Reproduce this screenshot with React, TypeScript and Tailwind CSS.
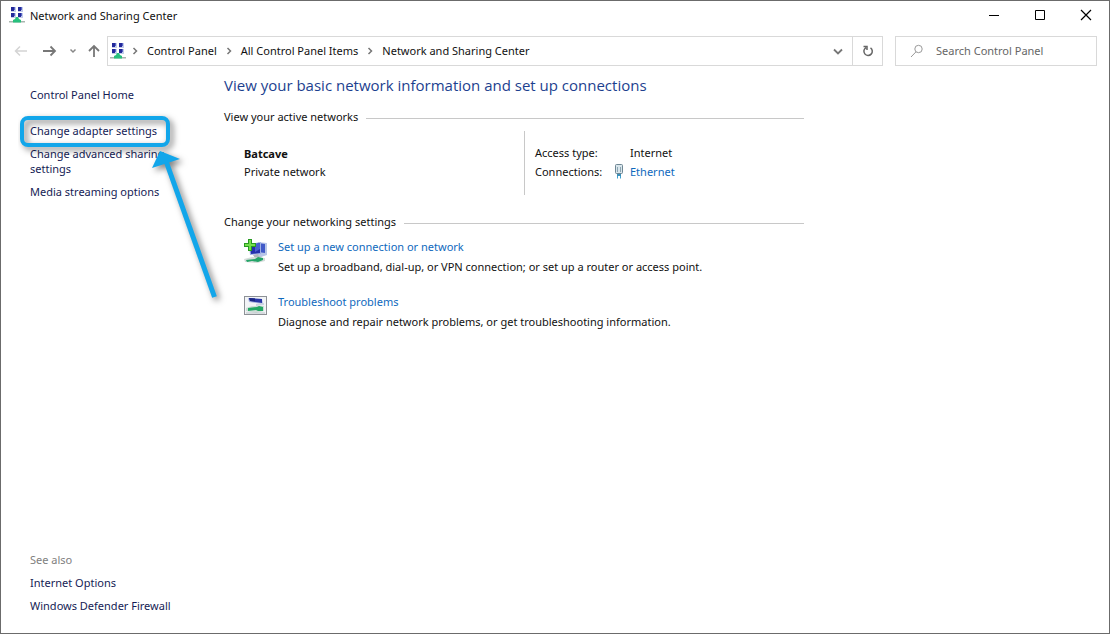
import type { ReactNode } from "react";

function NetworkIcon() {
  return (
    <svg className="h-4 w-4 shrink-0" viewBox="0 0 16 16" aria-hidden="true">
      {[0, 6].map((y) =>
        [2, 9].map((x) => (
          <g key={`${x}-${y}`}>
            <rect x={x} y={y} width="5" height="5" fill="#c3cbea" />
            <rect x={x} y={y} width="3" height="4" fill="#23289a" />
            <rect x={x + 3} y={y} width="1" height="3" fill="#5665c4" />
          </g>
        )),
      )}
      <path d="M0 14h16v1.500H0z" fill="#a9b5ae" />
      <path d="M7 10h2l1 2 2 1v2.500H4V13l2-1z" fill="#27c07d" />
    </svg>
  );
}

function NewConnectionIcon() {
  return (
    <svg className="h-7 w-6 shrink-0" viewBox="0 0 24 28" aria-hidden="true">
      <path d="M14 3l9 1v12l-6 2-5-3z" fill="#b8c6e8" />
      <path d="M14 4l7 1v9l-7-1z" fill="#4059c8" />
      <path d="M5 5l12-2v12L6 16z" fill="#9fb0e4" />
      <path d="M6 6l10-2v10l-9 1z" fill="#2430ac" />
      <path d="M11 5l5-1v6l-5 3z" fill="#4a60d0" />
      <path d="M9 16l5-1 1 2 3 1-7 1z" fill="#aeb5bd" />
      <path d="M0 20l8-2 13 1v3l-8 2-12-1z" fill="#d5dcda" />
      <path d="M2 21l9-1 3-2 5 1v2l-5 2-6-1-5 1z" fill="#24a568" />
      <path d="M4 0h4v4h4v4H8v4H4V8H0V4h4z" fill="#299b22" />
      <path d="M5 1h2v4h4v2H7v4H5V7H1V5h4z" fill="#75df4c" />
    </svg>
  );
}

function TroubleshootIcon() {
  return (
    <svg className="mt-0.5 h-5 w-6 shrink-0" viewBox="0 0 24 20" aria-hidden="true">
      <rect x="0.500" y="0.500" width="22" height="18" fill="#f2f4f6" stroke="#8d9196" />
      <path d="M4 2l14 1 1 5-14-2z" fill="#aab6e2" />
      <path d="M5 2l13 1v4L6 5z" fill="#2937a8" />
      <path d="M5 2l6 .5v3L6 5z" fill="#1b2683" />
      <path d="M12 8l8-1v2l-8 1z" fill="#ccd4e2" />
      <path d="M2 12l6-2 12 0v5l-8 2-10-2z" fill="#cfdcd7" />
      <path d="M4 12l9-1 2-1 4 1v4l-5 0-2-1-8 1z" fill="#22a863" />
      <path d="M2 17h19" stroke="#bcc3c8" />
    </svg>
  );
}

function EthernetIcon() {
  return (
    <svg className="h-[15px] w-2 shrink-0" viewBox="0 0 8 15" aria-hidden="true">
      <rect x="0.500" y="0.500" width="7" height="9" rx="1" fill="#d9e6ec" stroke="#6f8794" />
      <path d="M2.500 3v5M5.500 3v5" stroke="#8ba5b2" />
      <path d="M2 10h4v2H2z" fill="#3d8fb8" />
      <path d="M2.500 12v2.500M5.500 12v2.500" stroke="#3fa0cf" />
    </svg>
  );
}

function Chevron() {
  return (
    <svg className="h-2 w-2 shrink-0" viewBox="0 0 8 8" fill="none" stroke="#777" strokeWidth="1.500" aria-hidden="true">
      <path d="M2.500 1l3 3-3 3" />
    </svg>
  );
}

function SideLink({ children }: { children: ReactNode }) {
  return (
    <a href="#" className="text-[#151c55] hover:underline">
      {children}
    </a>
  );
}

function TitleBar() {
  return (
    <header className="flex h-7 items-center justify-between pl-2">
      <div className="flex items-center gap-[5px]">
        <NetworkIcon />
        <h1>Network and Sharing Center</h1>
      </div>
      <div className="flex h-full text-black">
        <button aria-label="Minimize" className="flex w-[46px] items-center justify-center">
          <svg className="h-3 w-3" viewBox="0 0 12 12" stroke="currentColor" fill="none"><path d="M1 6.500h10" /></svg>
        </button>
        <button aria-label="Maximize" className="flex w-[46px] items-center justify-center">
          <svg className="h-3 w-3" viewBox="0 0 12 12" stroke="currentColor" fill="none"><path d="M1.500 1.500h9v9h-9z" /></svg>
        </button>
        <button aria-label="Close" className="flex w-[46px] items-center justify-center">
          <svg className="h-3 w-3" viewBox="0 0 12 12" stroke="currentColor" strokeWidth="1.200" fill="none"><path d="M1 1l10 10M11 1L1 11" /></svg>
        </button>
      </div>
    </header>
  );
}

function NavBar() {
  return (
    <nav aria-label="Address" className="mt-[7px] flex h-[30px] items-stretch pr-3">
      <div className="flex w-[106px] shrink-0 items-center pl-3">
        <button aria-label="Back" className="text-[#d4d4d4]">
          <svg className="h-4 w-4" viewBox="0 0 16 16" fill="none" stroke="currentColor" strokeWidth="1.500"><path d="M14 8H2.500M7 3.500L2.500 8 7 12.500" /></svg>
        </button>
        <button aria-label="Forward" className="ml-3 text-[#777]">
          <svg className="h-4 w-4" viewBox="0 0 16 16" fill="none" stroke="currentColor" strokeWidth="1.800"><path d="M2 8h12M9.500 3.500L14 8l-4.500 4.500" /></svg>
        </button>
        <button aria-label="Recent locations" className="ml-3 text-[#888]">
          <svg className="h-2 w-2" viewBox="0 0 8 8" fill="none" stroke="currentColor" strokeWidth="1.500"><path d="M1.500 2.500L4 5l2.500-2.500" /></svg>
        </button>
        <button aria-label="Up" className="ml-2 text-[#777]">
          <svg className="h-4 w-4" viewBox="0 0 16 16" fill="none" stroke="currentColor" strokeWidth="1.800"><path d="M9 14V3M4 8l5-5 5 5" /></svg>
        </button>
      </div>
      <div className="flex min-w-0 flex-1 border border-[#d9d9d9]">
        <div className="flex min-w-0 flex-1 items-center pl-[2px] pb-px">
          <NetworkIcon />
          <ol className="flex min-w-0 items-center gap-2 whitespace-nowrap pl-[5px]">
            <li className="flex items-center gap-2"><Chevron /><a href="#">Control Panel</a></li>
            <li className="flex items-center gap-2"><Chevron /><a href="#">All Control Panel Items</a></li>
            <li className="flex items-center gap-2"><Chevron /><a href="#">Network and Sharing Center</a></li>
          </ol>
        </div>
        <button aria-label="Previous locations" className="flex w-7 items-center justify-center text-[#777]">
          <svg className="h-3 w-3" viewBox="0 0 12 12" fill="none" stroke="currentColor" strokeWidth="1.800"><path d="M2 4.500l4 4 4-4" /></svg>
        </button>
        <button aria-label="Refresh" className="flex w-[30px] items-center justify-center border-l border-[#d9d9d9] text-[#666]">
          <svg className="h-3 w-3" viewBox="0 0 12 12" fill="none" stroke="currentColor" strokeWidth="1.500"><path d="M8.500 2.800A4.200 4.200 0 1 1 4 2.600M1.500 1.500H5V5" /></svg>
        </button>
      </div>
      <div className="ml-3 flex w-[202px] shrink-0 items-center border border-[#d9d9d9] pl-3.5">
        <svg className="h-3.5 w-3.5 shrink-0" viewBox="0 0 14 14" fill="none" stroke="#999" aria-hidden="true">
          <circle cx="8.500" cy="5" r="3.700" />
          <path d="M6 7.800L1 13" />
        </svg>
        <input type="search" aria-label="Search Control Panel" placeholder="Search Control Panel" className="min-w-0 flex-1 bg-transparent pb-px pl-3 outline-none placeholder:text-[#666]" />
      </div>
    </nav>
  );
}

function Callout() {
  return (
    <svg className="pointer-events-none absolute -left-3 -top-3 h-[204px] w-[216px]" viewBox="18 111 216 204" fill="none" aria-hidden="true">
      <g className="drop-shadow-[3px_3px_3px_rgba(0,0,0,0.5)]">
        <rect x="22" y="118" width="146" height="27" rx="6" stroke="#12a6ea" strokeWidth="4" />
        <path d="M166 161L214.500 297" stroke="#12a6ea" strokeWidth="5" />
        <path d="M160 151L180 159L152 168Z" fill="#12a6ea" />
      </g>
    </svg>
  );
}

function Sidebar() {
  return (
    <aside className="flex w-[223px] shrink-0 flex-col pb-5 pl-[29px] pt-[21px]">
      <SideLink>Control Panel Home</SideLink>
      <div className="relative mt-[21px] flex w-[140px] flex-col gap-2">
        <SideLink>Change adapter settings</SideLink>
        <SideLink>Change advanced sharing settings</SideLink>
        <SideLink>Media streaming options</SideLink>
        <Callout />
      </div>
      <div className="mt-auto flex flex-col gap-2">
        <h2 className="text-[#808080]">See also</h2>
        <SideLink>Internet Options</SideLink>
        <SideLink>Windows Defender Firewall</SideLink>
      </div>
    </aside>
  );
}

function SectionTitle({ children }: { children: ReactNode }) {
  return (
    <h3 className="flex items-center gap-2 after:mt-[3px] after:h-px after:flex-1 after:bg-[#c8c8c8] after:content-['']">
      {children}
    </h3>
  );
}

function Task({ icon, title, text }: { icon: ReactNode; title: string; text: string }) {
  return (
    <li className="flex h-10 gap-2.5">
      {icon}
      <div className="flex flex-col gap-[5px]">
        <a href="#" className="self-start text-[#0f69bd] hover:underline">{title}</a>
        <p>{text}</p>
      </div>
    </li>
  );
}

export default function App() {
  return (
    <div className="flex min-h-screen flex-col border border-[#6b6b6b] bg-white font-['Noto_Sans','Open_Sans',sans-serif] text-[11px] leading-[15px] text-[#111]">
      <TitleBar />
      <NavBar />
      <div className="flex flex-1">
        <Sidebar />
        <main className="max-w-[580px] flex-1 pt-[9px]">
          <h2 className="font-['Open_Sans','Noto_Sans',sans-serif] text-[15px] leading-5 text-[#1d3f8f]">View your basic network information and set up connections</h2>
          <section className="mt-3.5">
            <SectionTitle>View your active networks</SectionTitle>
            <div className="mt-[7px] flex h-16">
              <div className="flex w-[300px] flex-col gap-[3px] pl-5 pt-[15px]">
                <p className="font-bold">Batcave</p>
                <p>Private network</p>
              </div>
              <dl className="flex flex-1 flex-col gap-1 border-l border-[#c8c8c8] pl-2.5 pt-3.5">
                <div className="flex">
                  <dt className="w-[95px]">Access type:</dt>
                  <dd>Internet</dd>
                </div>
                <div className="flex">
                  <dt className="w-20">Connections:</dt>
                  <dd className="flex items-center gap-[7px]">
                    <EthernetIcon />
                    <a href="#" className="text-[#0f69bd] hover:underline">Ethernet</a>
                  </dd>
                </div>
              </dl>
            </div>
          </section>
          <section className="mt-[19px]">
            <SectionTitle>Change your networking settings</SectionTitle>
            <ul className="mt-2.5 flex flex-col gap-[15px] pl-5">
              <Task icon={<NewConnectionIcon />} title="Set up a new connection or network" text="Set up a broadband, dial-up, or VPN connection; or set up a router or access point." />
              <Task icon={<TroubleshootIcon />} title="Troubleshoot problems" text="Diagnose and repair network problems, or get troubleshooting information." />
            </ul>
          </section>
        </main>
      </div>
    </div>
  );
}
